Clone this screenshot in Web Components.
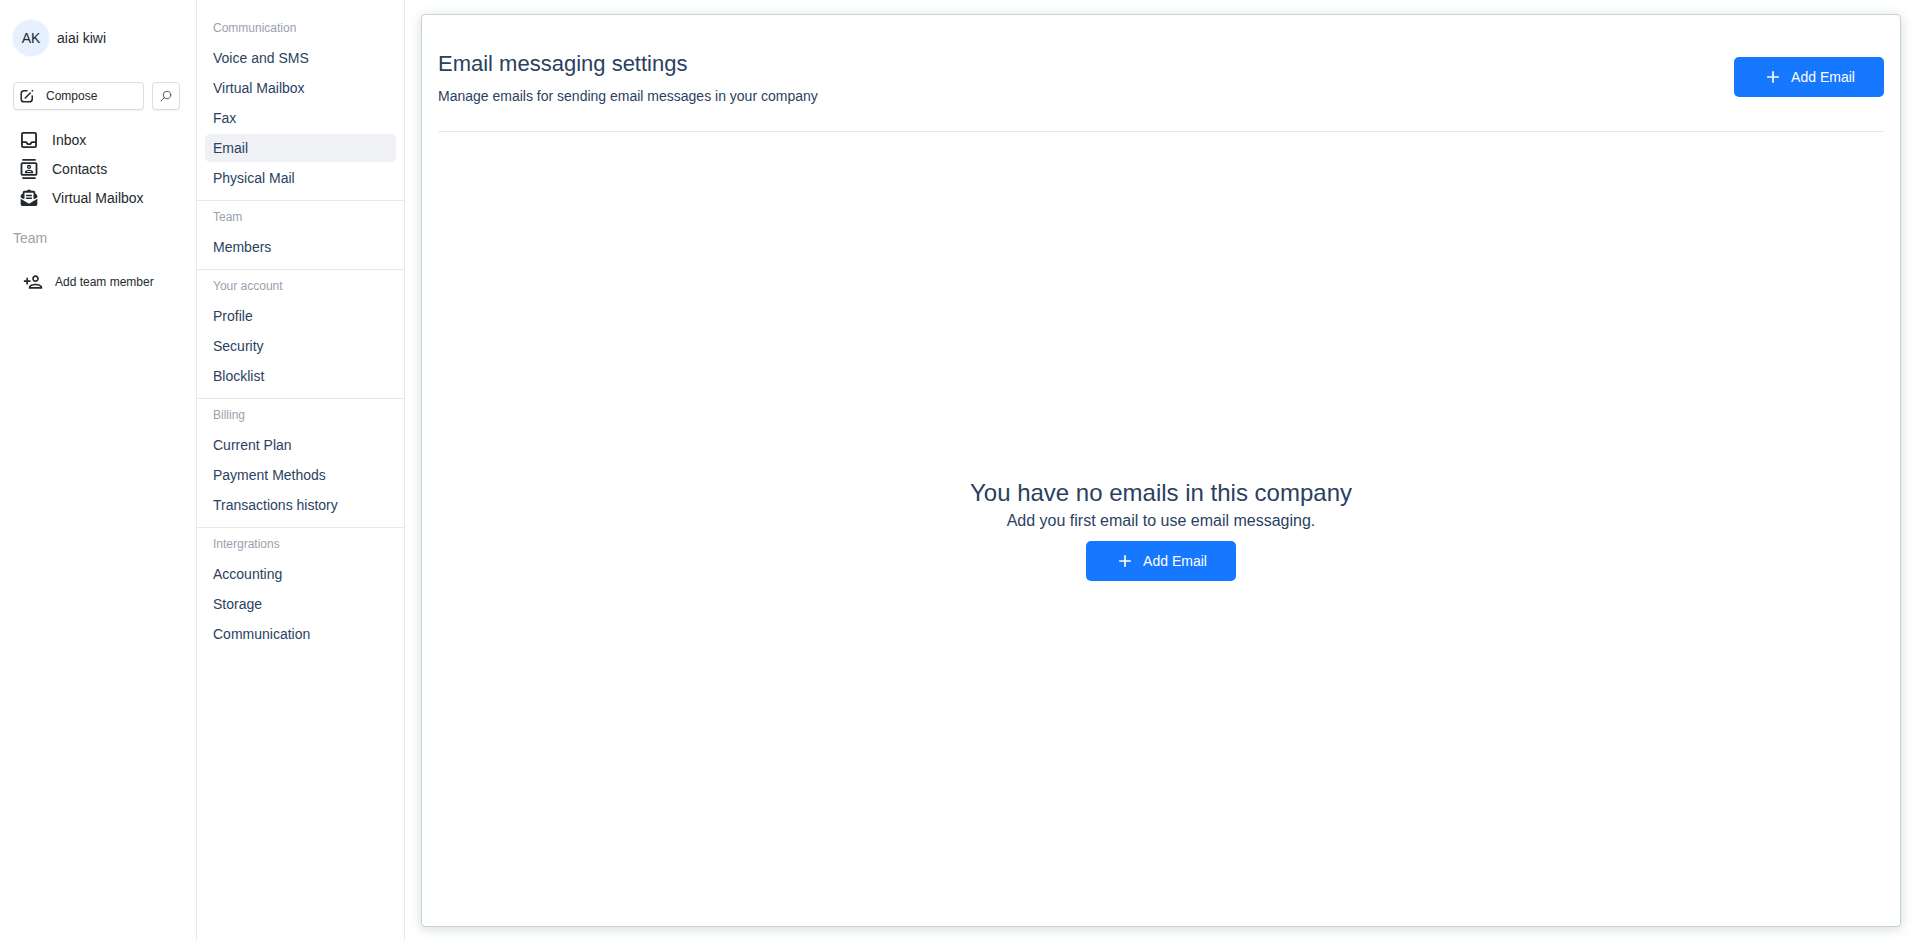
<!DOCTYPE html>
<html lang="en">
<head>
<meta charset="utf-8">
<meta name="viewport" content="width=device-width, initial-scale=1">
<title>Email messaging settings</title>
<style>
  body {
    margin: 0;
    background-color: #fff;
    color: #24292e;
    font-family: "Liberation Sans", Arial, sans-serif;
    font-size: 14px;
    line-height: 20px;
    --ink: #2b3f5f;
    --muted: #9aa1ae;
    --line: #e7e8ea;
    --primary: #1677ff;
  }
</style>
</head>
<body>
<app-layout>
  <side-bar slot="sidebar">
    <user-badge slot="user" initials="AK">aiai kiwi</user-badge>
    <side-link icon="inbox">Inbox</side-link>
    <side-link icon="contacts">Contacts</side-link>
    <side-link icon="mailbox">Virtual Mailbox</side-link>
  </side-bar>

  <settings-menu slot="menu">
    <menu-section label="Communication">
      <menu-item>Voice and SMS</menu-item>
      <menu-item>Virtual Mailbox</menu-item>
      <menu-item>Fax</menu-item>
      <menu-item active>Email</menu-item>
      <menu-item>Physical Mail</menu-item>
    </menu-section>
    <menu-section label="Team">
      <menu-item>Members</menu-item>
    </menu-section>
    <menu-section label="Your account">
      <menu-item>Profile</menu-item>
      <menu-item>Security</menu-item>
      <menu-item>Blocklist</menu-item>
    </menu-section>
    <menu-section label="Billing">
      <menu-item>Current Plan</menu-item>
      <menu-item>Payment Methods</menu-item>
      <menu-item>Transactions history</menu-item>
    </menu-section>
    <menu-section label="Intergrations">
      <menu-item>Accounting</menu-item>
      <menu-item>Storage</menu-item>
      <menu-item>Communication</menu-item>
    </menu-section>
  </settings-menu>

  <content-panel>
    <span slot="title">Email messaging settings</span>
    <span slot="subtitle">Manage emails for sending email messages in your company</span>
    <add-button slot="action">Add Email</add-button>
    <empty-state>
      <span slot="title">You have no emails in this company</span>
      <span slot="text">Add you first email to use email messaging.</span>
      <add-button slot="action">Add Email</add-button>
    </empty-state>
  </content-panel>
</app-layout>

<script>
const icons = {
  compose: `<g fill="none" stroke="currentColor" stroke-width="2.6" stroke-linecap="round" stroke-linejoin="round">
    <path d="M12 3H7a5 5 0 0 0-5 5v9a5 5 0 0 0 5 5h9a5 5 0 0 0 5-5v-5"/>
    <path d="M9 15.500L17.500 7"/><path d="M21 3.500l.5-.5"/></g>`,
  search: `<g fill="none" stroke="currentColor" stroke-width="2" stroke-linecap="round">
    <circle cx="14" cy="10" r="7.500"/><path d="M8.500 15.500L2 22"/></g>`,
  inbox: `<g fill="none" stroke="currentColor" stroke-width="2.2" stroke-linejoin="round">
    <rect x="3.500" y="3.500" width="17" height="17" rx="1.500"/>
    <path d="M3.500 14.500h5l2 2.500h3l2-2.500h5"/></g>`,
  contacts: `<path d="M4 0h16v2H4zM4 22h16v2H4z"/>
    <rect x="3" y="5" width="18" height="14" rx="1" fill="none" stroke="currentColor" stroke-width="2.200"/>
    <circle cx="12" cy="9.500" r="1.700" fill="none" stroke="currentColor" stroke-width="1.600"/>
    <path fill-rule="evenodd" d="M17 16c0-2.100-3.300-3-5-3s-5 .9-5 3v1h10v-1zm-8-.5c.6-.5 2-1 3-1s2.400.5 3 1H9z"/>`,
  mailbox: `<path d="M2 13l10 6 10-6v6.500a2 2 0 0 1-2 2H4a2 2 0 0 1-2-2z"/>
    <path d="M2 11.500V9.500a2 2 0 0 1 1-1.700L5 6.500v6.500zM22 11.500V9.500a2 2 0 0 0-1-1.700L19 6.500V13z"/>
    <path d="M5.500 13V5.500a1 1 0 0 1 1-1h11a1 1 0 0 1 1 1V13" fill="none" stroke="currentColor" stroke-width="2.200"/>
    <path d="M8.500 4L12 1.500 15.500 4z"/>
    <path d="M8.500 8h7v1.800h-7zM8.500 11.500h7v1.800h-7z"/>`,
  addPerson: '<path d="M15 12c2.200 0 4-1.800 4-4s-1.800-4-4-4-4 1.800-4 4 1.800 4 4 4zm0-6c1.100 0 2 .9 2 2s-.9 2-2 2-2-.9-2-2 .9-2 2-2zm0 8c-2.670 0-8 1.340-8 4v2h16v-2c0-2.660-5.330-4-8-4zm-6 4c.22-.72 3.300-2 6-2s5.800 1.290 6 2H9zm-3-3v-3h3v-2H6V7H4v3H1v2h3v3h2z"/>',
  plus: '<path d="M11 5h2v6h6v2h-6v6h-2v-6H5v-2h6z"/>'
};

// <ui-icon name="...">
class UiIcon extends HTMLElement {
  constructor() {
    super();
    this.attachShadow({ mode: 'open' });
  }

  connectedCallback() {
    this.shadowRoot.innerHTML = `
      <style>
        :host {
          display: block;
          flex: none;
          width: var(--icon-size, 20px);
          height: var(--icon-size, 20px);
        }
        svg {
          display: block;
          width: 100%;
          height: 100%;
          fill: currentColor;
        }
      </style>
      <svg viewBox="0 0 24 24" aria-hidden="true">${icons[this.getAttribute('name')]}</svg>
    `;
  }
}

customElements.define('ui-icon', UiIcon);

// <app-layout>
class AppLayout extends HTMLElement {
  constructor() {
    super();
    this.attachShadow({ mode: 'open' });
    this.shadowRoot.innerHTML = `
      <style>
        :host {
          display: grid;
          grid-template-columns: 196px 209px 1fr;
          min-height: 100vh;
        }
        main {
          display: flex;
          padding: 14px 12px 13px 16px;
        }
      </style>
      <slot name="sidebar"></slot>
      <slot name="menu"></slot>
      <main><slot></slot></main>
    `;
  }
}

customElements.define('app-layout', AppLayout);

// <user-badge initials="..">
class UserBadge extends HTMLElement {
  constructor() {
    super();
    this.attachShadow({ mode: 'open' });
  }

  connectedCallback() {
    this.shadowRoot.innerHTML = `
      <style>
        :host {
          display: flex;
          align-items: center;
          gap: 8px;
        }
        .avatar {
          width: 36px;
          height: 36px;
          border-radius: 50%;
          background-color: #e6f0ff;
          box-shadow: 0 0 3px #e6f0ff;
          line-height: 36px;
          text-align: center;
        }
      </style>
      <span class="avatar">${this.getAttribute('initials')}</span>
      <slot></slot>
    `;
  }
}

customElements.define('user-badge', UserBadge);

// <side-link icon="...">
class SideLink extends HTMLElement {
  constructor() {
    super();
    this.attachShadow({ mode: 'open' });
  }

  connectedCallback() {
    this.shadowRoot.innerHTML = `
      <style>
        :host {
          display: block;
        }
        a {
          display: flex;
          align-items: center;
          gap: 13px;
          height: 29px;
          padding: 0 6px;
          color: inherit;
          text-decoration: none;
        }
      </style>
      <a href="#"><ui-icon name="${this.getAttribute('icon')}"></ui-icon><slot></slot></a>
    `;
  }
}

customElements.define('side-link', SideLink);

// <side-bar>
class SideBar extends HTMLElement {
  constructor() {
    super();
    this.attachShadow({ mode: 'open' });
    this.shadowRoot.innerHTML = `
      <style>
        :host {
          display: block;
          box-sizing: border-box;
          padding: 20px 16px 20px 13px;
        }
        .tools {
          display: flex;
          gap: 8px;
          margin: 26px 0 15px;
        }
        button {
          display: flex;
          align-items: center;
          box-sizing: border-box;
          height: 28px;
          border: 1px solid #dcdde0;
          border-radius: 4px;
          background-color: #fff;
          box-shadow: 0 1px 1px rgba(0, 0, 0, 0.06);
          color: inherit;
          font: inherit;
          font-size: 12px;
          cursor: pointer;
        }
        .compose {
          flex: 1;
          gap: 12px;
          padding: 0 6px;
          --icon-size: 14px;
        }
        .search {
          justify-content: center;
          width: 28px;
          padding: 0;
          color: #55585c;
          --icon-size: 12px;
        }
        h2 {
          margin: 16px 0;
          color: #a0a1a6;
          font-size: 14px;
          font-weight: normal;
        }
        .add {
          gap: 12px;
          margin-top: 20px;
          padding: 0 10px;
          border: none;
          box-shadow: none;
        }
      </style>
      <slot name="user"></slot>
      <div class="tools">
        <button type="button" class="compose"><ui-icon name="compose"></ui-icon>Compose</button>
        <button type="button" class="search" aria-label="Search"><ui-icon name="search"></ui-icon></button>
      </div>
      <nav><slot></slot></nav>
      <h2>Team</h2>
      <button type="button" class="add"><ui-icon name="addPerson"></ui-icon>Add team member</button>
    `;
  }
}

customElements.define('side-bar', SideBar);

// <settings-menu>
class SettingsMenu extends HTMLElement {
  constructor() {
    super();
    this.attachShadow({ mode: 'open' });
    this.shadowRoot.innerHTML = `
      <style>
        :host {
          display: block;
          border: solid var(--line);
          border-width: 0 1px;
          color: var(--ink);
        }
        ::slotted(menu-section:first-child) {
          padding-top: 18px;
          border-top: none;
        }
      </style>
      <slot></slot>
    `;
  }
}

customElements.define('settings-menu', SettingsMenu);

// <menu-section label="...">
class MenuSection extends HTMLElement {
  constructor() {
    super();
    this.attachShadow({ mode: 'open' });
  }

  connectedCallback() {
    this.shadowRoot.innerHTML = `
      <style>
        :host {
          display: block;
          padding: 6px 8px 8px;
          border-top: 1px solid var(--line);
        }
        h3 {
          margin: 0 8px 6px;
          color: var(--muted);
          font-size: 12px;
          font-weight: normal;
        }
      </style>
      <h3>${this.getAttribute('label')}</h3>
      <slot></slot>
    `;
  }
}

customElements.define('menu-section', MenuSection);

// <menu-item active>
class MenuItem extends HTMLElement {
  constructor() {
    super();
    this.attachShadow({ mode: 'open' });
    this.shadowRoot.innerHTML = `
      <style>
        :host {
          display: block;
          margin-top: 2px;
        }
        a {
          display: block;
          padding: 4px 8px;
          border-radius: 5px;
          color: inherit;
          text-decoration: none;
        }
        :host([active]) a,
        a:hover {
          background-color: #f0f1f5;
        }
      </style>
      <a href="#"><slot></slot></a>
    `;
  }
}

customElements.define('menu-item', MenuItem);

// <add-button>
class AddButton extends HTMLElement {
  constructor() {
    super();
    this.attachShadow({ mode: 'open' });
    this.shadowRoot.innerHTML = `
      <style>
        :host {
          display: block;
        }
        button {
          display: flex;
          align-items: center;
          justify-content: center;
          gap: 8px;
          min-width: 150px;
          height: 40px;
          padding: 0 16px;
          border: none;
          border-radius: 5px;
          background-color: var(--primary);
          color: #fff;
          font: inherit;
          font-size: 14px;
          cursor: pointer;
        }
      </style>
      <button type="button"><ui-icon name="plus"></ui-icon><slot></slot></button>
    `;
  }
}

customElements.define('add-button', AddButton);

// <content-panel>
class ContentPanel extends HTMLElement {
  constructor() {
    super();
    this.attachShadow({ mode: 'open' });
    this.shadowRoot.innerHTML = `
      <style>
        :host {
          display: flex;
          flex: 1;
          flex-direction: column;
          padding: 16px 16px 0;
          border: 1px solid #c6d2d5;
          border-radius: 4px;
          background-color: #fff;
          box-shadow: 0 2px 12px rgba(38, 78, 84, 0.2);
          color: var(--ink);
        }
        header {
          display: flex;
          align-items: center;
          justify-content: space-between;
          padding: 17px 0 25px;
          border-bottom: 1px solid var(--line);
        }
        h1 {
          margin: 0 0 6px;
          font-size: 22px;
          font-weight: normal;
          line-height: 32px;
        }
        p {
          margin: 0;
        }
        .body {
          display: grid;
          flex: 1;
          place-items: center;
        }
      </style>
      <header>
        <div>
          <h1><slot name="title"></slot></h1>
          <p><slot name="subtitle"></slot></p>
        </div>
        <slot name="action"></slot>
      </header>
      <div class="body"><slot></slot></div>
    `;
  }
}

customElements.define('content-panel', ContentPanel);

// <empty-state>
class EmptyState extends HTMLElement {
  constructor() {
    super();
    this.attachShadow({ mode: 'open' });
    this.shadowRoot.innerHTML = `
      <style>
        :host {
          display: flex;
          flex-direction: column;
          align-items: center;
        }
        h2 {
          margin: 0;
          font-size: 24px;
          font-weight: normal;
          line-height: 32px;
        }
        p {
          margin: 0 0 8px;
          font-size: 16px;
          line-height: 24px;
        }
      </style>
      <h2><slot name="title"></slot></h2>
      <p><slot name="text"></slot></p>
      <slot name="action"></slot>
    `;
  }
}

customElements.define('empty-state', EmptyState);
</script>
</body>
</html>
